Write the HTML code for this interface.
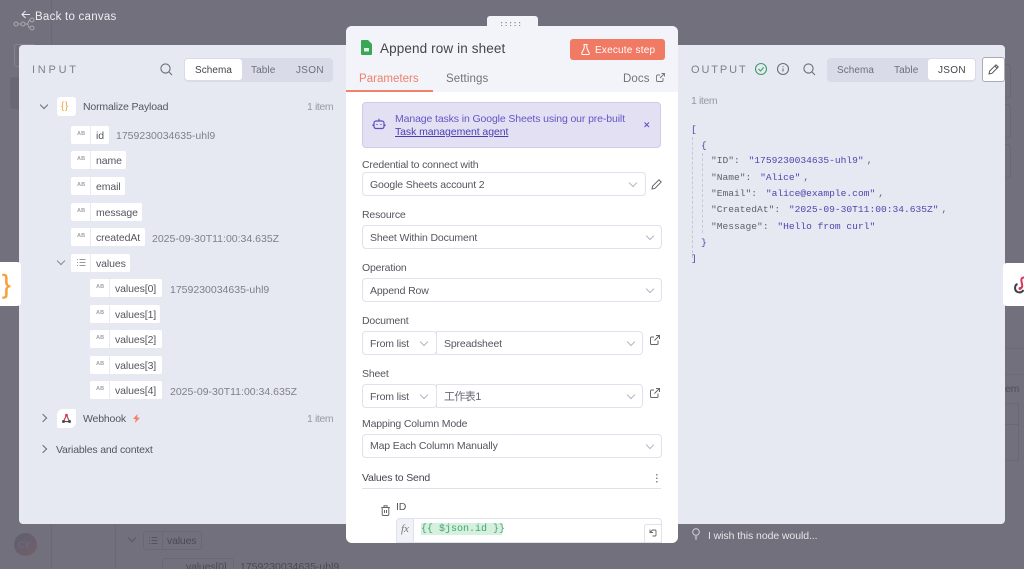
<!DOCTYPE html>
<html><head><meta charset="utf-8"><style>
*{box-sizing:border-box}
html,body{margin:0;padding:0;width:1024px;height:569px;overflow:hidden;background:#72707c}
body{position:relative;font-family:"Liberation Sans","Noto Sans CJK SC",sans-serif;color:#555560}
.a{position:absolute}
.t{position:absolute;white-space:nowrap;font-size:10.5px;line-height:14px;letter-spacing:-.17px;color:#55555f}
.d{color:#7f7f8a;letter-spacing:0}
.i{color:#9898a2;letter-spacing:-.4px}
.chip{position:absolute;background:#fff;border-radius:2px;height:18px}
.chip i{position:absolute;left:6px;top:4px;font:bold 5.5px/9px "Liberation Sans",sans-serif;letter-spacing:.2px;color:#a2a2aa}
.chip b{position:absolute;left:19px;top:0;width:1px;height:100%;background:#e8eaf1}
.chip span{position:absolute;left:25px;top:3px;font-size:10.5px;line-height:14px;letter-spacing:-.1px;color:#55555f;white-space:nowrap}
.sel{position:absolute;background:#fff;border:1px solid #dfe1ec;border-radius:4px;height:24px}
.sel span{position:absolute;left:7px;top:5px;font-size:10.5px;line-height:14px;letter-spacing:-.15px;color:#55555f;white-space:nowrap}
.chev{position:absolute;width:6px;height:6px;border-right:1px solid #b4b6c2;border-bottom:1px solid #b4b6c2;transform:rotate(45deg)}
.tc{position:absolute;width:6px;height:6px;border-right:1px solid #6c6c76;border-bottom:1px solid #6c6c76}
.m{position:absolute;white-space:pre;font:9.6px/14px "Liberation Mono",monospace;color:#5f5f6a}
.m em{font-style:normal;color:#4f45ad;margin-left:3px}
.m u{text-decoration:none;margin-left:3px}
.m em.n{margin-left:0}
svg{position:absolute;overflow:visible}
</style></head><body>

<!-- dim background -->
<div class="a" style="left:51px;top:0;width:1px;height:569px;background:#6a6874"></div>
<div class="a" style="left:115px;top:524px;width:1px;height:45px;background:#6a6874"></div>
<div class="a" style="left:14px;top:44px;width:22px;height:23px;border:1px solid #85838f;border-radius:3px"></div>
<div class="a" style="left:10px;top:77px;width:12px;height:32px;background:#6a6874;border-radius:3px"></div>
<svg style="left:13px;top:17px" width="24" height="14" fill="none" stroke="#a9a8b0" stroke-width="1"><circle cx="3" cy="7" r="2"/><circle cx="10" cy="7" r="2"/><circle cx="19" cy="3" r="2"/><circle cx="19" cy="11" r="2"/><path d="M5 7h3M12 7h2c2 0 1-4 3-4M14 7c2 0 1 4 3 4"/></svg>
<div class="a" style="left:14px;top:533px;width:23px;height:23px;border-radius:50%;background:linear-gradient(135deg,#5e5f72,#735f68)"></div>
<div class="t" style="left:18px;top:538px;color:#6f6d79;font-size:9px">CY</div>
<div class="tc" style="left:129px;top:535px;transform:rotate(45deg);border-color:#5a5864"></div>
<div class="a" style="left:143px;top:531px;width:59px;height:19px;border:1px solid #6a6874;border-radius:3px"></div>
<div class="a" style="left:162px;top:531px;width:1px;height:19px;background:#6a6874"></div>
<svg style="left:149px;top:536px" width="9" height="9" stroke="#55535f" stroke-width="1"><path d="M0 1.500h1M0 4.500h1M0 7.500h1M2.500 1.500h6M2.500 4.500h6M2.500 7.500h6"/></svg>
<div class="t" style="left:167px;top:534px;color:#4b4a54">values</div>
<div class="t" style="left:186px;top:560px;color:#4b4a54">values[0]</div>
<div class="t" style="left:240px;top:560px;color:#4b4a54;letter-spacing:0">1759230034635-uhl9</div>
<div class="a" style="left:162px;top:558px;width:72px;height:19px;border:1px solid #6a6874;border-radius:3px"></div>
<div class="a" style="left:1005px;top:64px;width:6px;height:34px;border:1px solid #6a6874;border-left:0;border-radius:0 3px 3px 0"></div>
<div class="a" style="left:1005px;top:104px;width:6px;height:34px;border:1px solid #6a6874;border-left:0;border-radius:0 3px 3px 0"></div>
<div class="a" style="left:1005px;top:144px;width:6px;height:34px;border:1px solid #6a6874;border-left:0;border-radius:0 3px 3px 0"></div>
<div class="a" style="left:1005px;top:348px;width:19px;height:1px;background:#6c6a76"></div>
<div class="a" style="left:1005px;top:374px;width:19px;height:1px;background:#6c6a76"></div>
<div class="t" style="left:1005px;top:382px;color:#4f4e58;font-size:10.5px">em</div>
<div class="a" style="left:1005px;top:403px;width:14px;height:58px;border:1px solid #6a6874;border-left:0"></div>
<div class="a" style="left:1005px;top:424px;width:14px;height:1px;background:#6a6874"></div>

<!-- back -->
<svg style="left:20px;top:9px" width="12" height="12" fill="none" stroke="#e8e8ec" stroke-width="1.100"><path d="M10 5.500H2M5.500 2L2 5.500L5.500 9"/></svg>
<div class="t" style="left:35px;top:10px;font-size:11.500px;letter-spacing:.25px;color:#eeeef1">Back to canvas</div>

<!-- input panel -->
<div class="a" style="left:19px;top:45px;width:330px;height:479px;background:#e6e9f2;border-radius:4px 0 0 4px"></div>
<div class="t" style="left:32px;top:63px;font-size:11px;letter-spacing:2.750px;color:#7f7f8a">INPUT</div>
<svg style="left:160px;top:63px" width="13" height="13" fill="none" stroke="#6d6d78" stroke-width="1.100"><circle cx="5.500" cy="5.500" r="4.600"/><path d="M9 9l3 3"/></svg>
<div class="a" style="left:184px;top:58px;width:149px;height:24px;background:#d9dce8;border-radius:4px"></div>
<div class="a" style="left:185px;top:59px;width:57px;height:21px;background:#fff;border-radius:3px"></div>
<div class="t" style="left:195px;top:64px;font-size:10px;letter-spacing:.05px;color:#44444e">Schema</div>
<div class="t" style="left:251px;top:64px;font-size:10px;letter-spacing:.1px;color:#6f6f7a">Table</div>
<div class="t" style="left:296px;top:64px;font-size:10px;letter-spacing:.3px;color:#6f6f7a">JSON</div>

<div class="tc" style="left:41px;top:102px;transform:rotate(45deg)"></div>
<div class="a" style="left:57px;top:97px;width:19px;height:19px;background:#fff;border-radius:3px"></div>
<div class="t" style="left:61px;top:100px;color:#f5a13c;font-size:10px;letter-spacing:.5px">{}</div>
<div class="t" style="left:83px;top:100px">Normalize Payload</div>
<div class="t i" style="left:307px;top:100px">1 item</div>

<div class="chip" style="left:71px;top:126px;width:38px"><i>AB</i><b></b><span>id</span></div>
<div class="t d" style="left:116px;top:129px">1759230034635-uhl9</div>
<div class="chip" style="left:71px;top:151px;width:55px"><i>AB</i><b></b><span>name</span></div>
<div class="chip" style="left:71px;top:177px;width:54px"><i>AB</i><b></b><span>email</span></div>
<div class="chip" style="left:71px;top:203px;width:71px"><i>AB</i><b></b><span>message</span></div>
<div class="chip" style="left:71px;top:228px;width:74px"><i>AB</i><b></b><span>createdAt</span></div>
<div class="t d" style="left:152px;top:232px">2025-09-30T11:00:34.635Z</div>
<div class="tc" style="left:58px;top:258px;transform:rotate(45deg);border-color:#888"></div>
<div class="chip" style="left:71px;top:254px;width:59px"><b></b><span>values</span></div>
<svg style="left:77px;top:258px" width="9" height="9" stroke="#999" stroke-width="1"><path d="M0 1.500h1M0 4.500h1M0 7.500h1M2.500 1.500h6M2.500 4.500h6M2.500 7.500h6"/></svg>
<div class="chip" style="left:90px;top:279px;width:72px"><i>AB</i><b></b><span>values[0]</span></div>
<div class="t d" style="left:170px;top:283px">1759230034635-uhl9</div>
<div class="chip" style="left:90px;top:305px;width:70px"><i>AB</i><b></b><span>values[1]</span></div>
<div class="chip" style="left:90px;top:330px;width:72px"><i>AB</i><b></b><span>values[2]</span></div>
<div class="chip" style="left:90px;top:356px;width:72px"><i>AB</i><b></b><span>values[3]</span></div>
<div class="chip" style="left:90px;top:381px;width:72px"><i>AB</i><b></b><span>values[4]</span></div>
<div class="t d" style="left:170px;top:385px">2025-09-30T11:00:34.635Z</div>

<div class="tc" style="left:40px;top:415px;transform:rotate(-45deg)"></div>
<div class="a" style="left:57px;top:409px;width:19px;height:19px;background:#fff;border-radius:6px 2px 6px 2px"></div>
<svg style="left:61px;top:413px" width="11" height="11" fill="none" stroke-width="1.200"><path d="M5.500 2L3 7.500" stroke="#d8365e"/><path d="M5.500 2L8 7.500" stroke="#8a5a68"/><path d="M3 8.500h5.500" stroke="#4a4a52"/><circle cx="5.500" cy="2.200" r="1.400" fill="#d8365e" stroke="none"/><circle cx="2.500" cy="8.500" r="1.500" fill="#4a4a52" stroke="none"/><circle cx="8.500" cy="8.500" r="1.500" fill="#4a4a52" stroke="none"/></svg>
<div class="t" style="left:83px;top:412px">Webhook</div>
<svg style="left:133px;top:414px" width="7" height="9" fill="#f4806a"><path d="M4.500 0L0 5h2.700L2 9l5-5.400H4.200z"/></svg>
<div class="t i" style="left:307px;top:412px">1 item</div>
<div class="tc" style="left:40px;top:446px;transform:rotate(-45deg)"></div>
<div class="t" style="left:56px;top:443px">Variables and context</div>

<!-- output panel -->
<div class="a" style="left:675px;top:45px;width:330px;height:479px;background:#e6e9f2;border-radius:0 4px 4px 0"></div>
<div class="t" style="left:691px;top:63px;font-size:11px;letter-spacing:1.900px;color:#7f7f8a">OUTPUT</div>
<svg style="left:755px;top:63px" width="13" height="13" fill="none" stroke="#3f9e68" stroke-width="1.100"><circle cx="6" cy="6" r="5.500"/><path d="M3.500 6l2 2 3.200-3.600"/></svg>
<svg style="left:777px;top:63px" width="13" height="13" fill="none" stroke="#6d6d78" stroke-width="1.100"><circle cx="6" cy="6" r="5.500"/><path d="M6 5.500v3M6 3.300v1"/></svg>
<svg style="left:803px;top:63px" width="13" height="13" fill="none" stroke="#6d6d78" stroke-width="1.100"><circle cx="5.500" cy="5.500" r="4.600"/><path d="M9 9l3 3"/></svg>
<div class="a" style="left:827px;top:58px;width:149px;height:24px;background:#d9dce8;border-radius:4px"></div>
<div class="a" style="left:928px;top:59px;width:47px;height:21px;background:#fff;border-radius:3px"></div>
<div class="t" style="left:837px;top:64px;font-size:10px;letter-spacing:.05px;color:#6f6f7a">Schema</div>
<div class="t" style="left:894px;top:64px;font-size:10px;letter-spacing:.1px;color:#6f6f7a">Table</div>
<div class="t" style="left:938px;top:64px;font-size:10px;letter-spacing:.3px;color:#44444e">JSON</div>
<div class="a" style="left:982px;top:57px;width:23px;height:25px;background:#fff;border:1px solid #a9abb6;border-radius:3px"></div>
<svg style="left:988px;top:64px" width="11" height="11" fill="none" stroke="#555" stroke-width="1"><path d="M1 10l.7-3L8 .8l2.200 2.200L4 9.300zM6.800 2l2.200 2.200"/></svg>
<div class="t i" style="left:691px;top:94px">1 item</div>

<div class="a" style="left:692px;top:137px;width:0;height:121px;border-left:1px dashed #c6c8d4"></div>
<div class="a" style="left:702px;top:153px;width:0;height:80px;border-left:1px dashed #c6c8d4"></div>
<div class="m" style="left:691px;top:123px"><em class="n">[</em></div>
<div class="m" style="left:701px;top:139px"><em class="n">{</em></div>
<div class="m" style="left:711px;top:154px">"ID": <em>"1759230034635-uhl9"</em><u>,</u></div>
<div class="m" style="left:711px;top:171px">"Name": <em>"Alice"</em><u>,</u></div>
<div class="m" style="left:711px;top:187px">"Email": <em>"alice@example.com"</em><u>,</u></div>
<div class="m" style="left:711px;top:203px">"CreatedAt": <em>"2025-09-30T11:00:34.635Z"</em><u>,</u></div>
<div class="m" style="left:711px;top:220px">"Message": <em>"Hello from curl"</em></div>
<div class="m" style="left:701px;top:236px"><em class="n">}</em></div>
<div class="m" style="left:691px;top:252px"><em class="n">]</em></div>

<svg style="left:692px;top:528px" width="9" height="12" fill="none" stroke="#dcdce2" stroke-width=".9"><circle cx="4" cy="4" r="3.300"/><path d="M2.700 9h2.600M3 11h2"/></svg>
<div class="t" style="left:708px;top:529px;color:#e5e5ea;letter-spacing:-.08px">I wish this node would...</div>

<!-- side nodes -->
<div class="a" style="left:0;top:262px;width:21px;height:44px;background:#fff;border-radius:0 4px 4px 0"></div>
<div class="a" style="left:2px;top:271px;font:26px/26px 'Liberation Sans',sans-serif;color:#f5a13c;-webkit-text-stroke:.4px #f5a13c">}</div>
<div class="a" style="left:1003px;top:263px;width:21px;height:43px;background:#fff;border-radius:4px 0 0 4px"></div>
<svg style="left:1014px;top:275px" width="12" height="20" fill="none" stroke-width="2"><path d="M10 2.500c-2.500 0-3 2-2.500 4l.7 3.500c.3 2-.7 3-2.200 3.500" stroke="#d8365e"/><path d="M3.500 9C.5 10 0 15.500 3.500 17c2.500 1 5 0 6-2" stroke="#394049"/><circle cx="6" cy="13.500" r="1.500" fill="#d8365e" stroke="none"/></svg>

<!-- center panel -->
<div class="a" style="left:487px;top:16px;width:51px;height:12px;background:#f2f4f9;border-radius:3px 3px 0 0"></div>
<svg style="left:501px;top:22px" width="22" height="5" fill="#8b8b96"><path d="M0 0h1.200v1.200H0zM4.500 0h1.200v1.200H4.500zM9 0h1.200v1.200H9zM13.500 0h1.200v1.200h-1.200zM18 0h1.200v1.200H18zM0 3h1.200v1.200H0zM4.500 3h1.200v1.200H4.500zM9 3h1.200v1.200H9zM13.500 3h1.200v1.200h-1.200zM18 3h1.200v1.200H18z"/></svg>
<div class="a" style="left:346px;top:26px;width:332px;height:517px;background:#fff;border-radius:6px;overflow:hidden">
  <div class="a" style="left:0;top:0;width:332px;height:66px;background:#f2f4f9"></div>
</div>
<svg style="left:361px;top:40px" width="11" height="15"><path d="M1 0h6l4 4v10a1 1 0 0 1-1 1H1a1 1 0 0 1-1-1V1a1 1 0 0 1 1-1z" fill="#3aa756"/><path d="M3 8h5v3.500H3z" fill="#dff2e2"/></svg>
<div class="t" style="left:380px;top:42px;font-size:13.500px;letter-spacing:.12px;color:#44444e">Append row in sheet</div>
<div class="a" style="left:570px;top:39px;width:95px;height:21px;background:#f07a64;border-radius:3px"></div>
<svg style="left:581px;top:44px" width="9" height="11" fill="none" stroke="#fff" stroke-width="1"><path d="M2.500 .5h4M3.200 .5v3.500L.8 9a1 1 0 0 0 .9 1.500h5.600a1 1 0 0 0 .9-1.500L5.800 4V.5"/></svg>
<div class="t" style="left:595px;top:44px;color:#fff;font-size:10px;letter-spacing:.2px">Execute step</div>
<div class="t" style="left:359px;top:72px;font-size:11.500px;letter-spacing:.02px;color:#f0816a">Parameters</div>
<div class="t" style="left:446px;top:72px;font-size:11.500px;letter-spacing:.1px;color:#73737e">Settings</div>
<div class="t" style="left:623px;top:72px;font-size:11.500px;letter-spacing:.1px;color:#73737e">Docs</div>
<svg style="left:656px;top:73px" width="9" height="9" fill="none" stroke="#73737e" stroke-width=".9"><path d="M7 5v2.500a1 1 0 0 1-1 1H1.500a1 1 0 0 1-1-1V3a1 1 0 0 1 1-1H4M5.500.5h3v3M8.500.5L4 5"/></svg>
<div class="a" style="left:346px;top:90px;width:87px;height:2px;background:#f0816a"></div>

<div class="a" style="left:362px;top:102px;width:299px;height:46px;background:#e3e0f4;border:1px solid #cfcbe8;border-radius:4px"></div>
<svg style="left:373px;top:118px" width="12" height="12" fill="none" stroke="#5b4fc0" stroke-width="1.200"><rect x="1" y="3" width="10" height="7.500" rx="2"/><path d="M6 3V.8M0 6.500v1.500M12 6.500v1.500M4 6v1M8 6v1"/></svg>
<div class="t" style="left:395px;top:112px;color:#6357c4;letter-spacing:-.12px">Manage tasks in Google Sheets using our pre-built</div>
<div class="t" style="left:395px;top:125px;color:#4a3fb0;letter-spacing:-.08px;text-decoration:underline">Task management agent</div>
<svg style="left:644px;top:122px" width="6" height="6" stroke="#5b4fc0" stroke-width="1"><path d="M.5 .5l4.500 4.500M5 .5L.5 5"/></svg>

<div class="t" style="left:362px;top:158px">Credential to connect with</div>
<div class="sel" style="left:362px;top:172px;width:284px"><span>Google Sheets account 2</span></div>
<div class="chev" style="left:630px;top:180px"></div>
<svg style="left:651px;top:179px" width="11" height="11" fill="none" stroke="#666" stroke-width="1"><path d="M1 10l.7-3L8 .8l2.200 2.200L4 9.300z"/></svg>

<div class="t" style="left:362px;top:208px">Resource</div>
<div class="sel" style="left:362px;top:225px;width:300px"><span>Sheet Within Document</span></div>
<div class="chev" style="left:647px;top:233px"></div>

<div class="t" style="left:362px;top:261px">Operation</div>
<div class="sel" style="left:362px;top:278px;width:300px"><span>Append Row</span></div>
<div class="chev" style="left:647px;top:286px"></div>

<div class="t" style="left:362px;top:314px">Document</div>
<div class="sel" style="left:362px;top:331px;width:75px"><span>From list</span></div>
<div class="chev" style="left:421px;top:339px"></div>
<div class="sel" style="left:436px;top:331px;width:207px;border-radius:0 4px 4px 0"><span>Spreadsheet</span></div>
<div class="chev" style="left:628px;top:339px"></div>
<svg style="left:650px;top:335px" width="10" height="10" fill="none" stroke="#666" stroke-width="1"><path d="M8 5.500v3a1 1 0 0 1-1 1H1.500a1 1 0 0 1-1-1V3a1 1 0 0 1 1-1H4M6 .5h3.500v3.500M9.500 .5L4.500 5.500"/></svg>

<div class="t" style="left:362px;top:367px">Sheet</div>
<div class="sel" style="left:362px;top:384px;width:75px"><span>From list</span></div>
<div class="chev" style="left:421px;top:392px"></div>
<div class="sel" style="left:436px;top:384px;width:207px;border-radius:0 4px 4px 0"><span style="font-size:11px;letter-spacing:-.6px;color:#6a6a74">工作表1</span></div>
<div class="chev" style="left:628px;top:392px"></div>
<svg style="left:650px;top:388px" width="10" height="10" fill="none" stroke="#666" stroke-width="1"><path d="M8 5.500v3a1 1 0 0 1-1 1H1.500a1 1 0 0 1-1-1V3a1 1 0 0 1 1-1H4M6 .5h3.500v3.500M9.500 .5L4.500 5.500"/></svg>

<div class="t" style="left:362px;top:417px">Mapping Column Mode</div>
<div class="sel" style="left:362px;top:434px;width:300px"><span style="top:4px">Map Each Column Manually</span></div>
<div class="chev" style="left:647px;top:442px"></div>

<div class="t" style="left:362px;top:471px;color:#44444e">Values to Send</div>
<svg style="left:656px;top:474px" width="2" height="9" fill="#888"><path d="M0 0h1.500v1.500H0zM0 3.500h1.500V5H0zM0 7h1.500v1.500H0z"/></svg>
<div class="a" style="left:362px;top:488px;width:299px;height:1px;background:#dfe1ea"></div>
<svg style="left:381px;top:505px" width="9" height="11" fill="none" stroke="#666" stroke-width="1"><path d="M.2 2.500h8.600M3 2.500V.8h3v1.700M1.200 2.500v7a1 1 0 0 0 1 1h4.600a1 1 0 0 0 1-1v-7M3.500 5v3M5.500 5v3"/></svg>
<div class="t" style="left:396px;top:500px">ID</div>
<div class="a" style="left:396px;top:518px;width:266px;height:25px;background:#fff;border:1px solid #dfe1ec;border-radius:4px 4px 0 0"></div>
<div class="a" style="left:396px;top:518px;width:18px;height:25px;background:#f1f2f8;border:1px solid #dfe1ec;border-radius:4px 0 0 0"></div>
<div class="a" style="left:401px;top:522px;font:italic 11px/14px 'Liberation Serif',serif;color:#777">fx</div>
<div class="a" style="left:421px;top:523px;width:81px;height:12px;background:#d5f0de"></div>
<div class="m" style="left:421px;top:523px;color:#45a56e;font-size:10px;line-height:13px">{{ $json.id }}</div>
<div class="a" style="left:644px;top:524px;width:18px;height:19px;background:#fff;border:1px solid #dfe1ec;border-radius:3px 0 0 0"></div>
<svg style="left:649px;top:529px" width="8" height="8" fill="none" stroke="#666" stroke-width=".9"><path d="M1 .5v3h3M1 3.500L3.500 1H6a1 1 0 0 1 1 1v4a1 1 0 0 1-1 1H3.500"/></svg>
</body></html>
